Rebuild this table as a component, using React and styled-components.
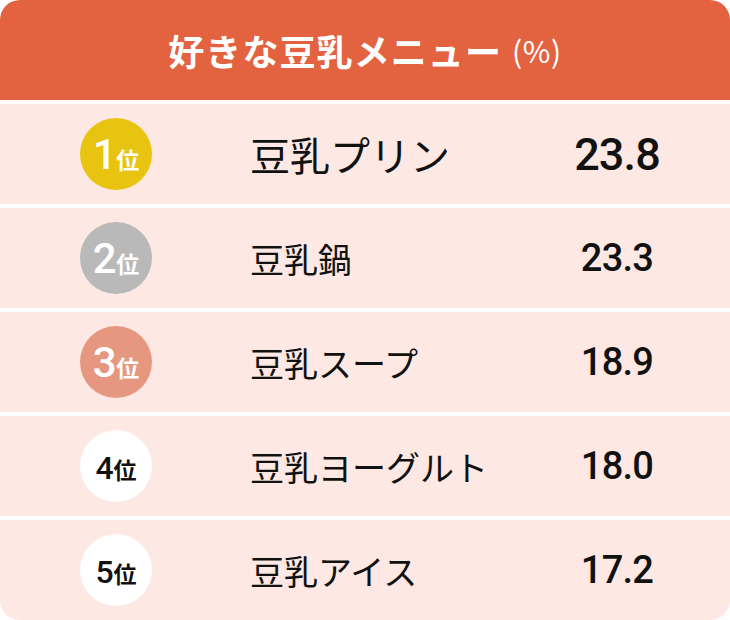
import React from 'react';
import styled, { createGlobalStyle } from 'styled-components';

const GlobalStyle = createGlobalStyle`
  html, body {
    margin: 0;
    padding: 0;
    background: #ffffff;
  }
  body {
    font-family: 'Noto Sans CJK JP', 'Noto Sans', sans-serif;
  }
`;

const Card = styled.div`
  width: 730px;
  height: 620px;
  border-radius: 20px;
  overflow: hidden;
  display: flex;
  flex-direction: column;
  gap: 4px;
  background: #ffffff;
`;

const Header = styled.div`
  height: 100px;
  flex-shrink: 0;
  background: #e3623f;
  color: #ffffff;
  display: flex;
  align-items: center;
  justify-content: center;
  font-size: 36px;
  font-weight: 700;
  letter-spacing: 0.03em;
`;

const Unit = styled.span`
  font-size: 30px;
  font-weight: 400;
  margin-left: 10px;
  letter-spacing: 0.02em;
`;

const Row = styled.div`
  height: 100px;
  flex-shrink: 0;
  background: #fde8e3;
  display: grid;
  grid-template-columns: 72px 1fr 140px;
  align-items: center;
  padding: 0 43px 0 80px;
`;

const Badge = styled.div`
  width: 72px;
  height: 72px;
  border-radius: 50%;
  background: ${p => p.$bg};
  color: ${p => p.$fg};
  display: flex;
  align-items: baseline;
  justify-content: center;
  padding-top: ${p => (p.$big ? '16px' : '22px')};
  box-sizing: border-box;
  font-weight: 700;
`;

const RankNum = styled.span`
  font-family: Roboto, 'Liberation Sans', sans-serif;
  font-size: ${p => (p.$big ? '42px' : '32px')};
  font-weight: 500;
  line-height: 1;
  letter-spacing: -0.03em;
`;

const RankSuffix = styled.span`
  font-size: 23px;
  line-height: 1;
  margin-left: 1px;
`;

const Name = styled.div`
  margin-left: 98px;
  color: #111111;
  font-size: ${p => (p.$big ? '40px' : '34px')};
  white-space: nowrap;
`;

const Value = styled.div`
  text-align: center;
  color: #111111;
  font-family: Roboto, 'Liberation Sans', sans-serif;
  font-size: ${p => (p.$big ? '45px' : '38px')};
  font-weight: 500;
  letter-spacing: -0.02em;
`;

const items = [
  { rank: 1, name: '豆乳プリン', value: '23.8', bg: '#e8c30f', fg: '#ffffff' },
  { rank: 2, name: '豆乳鍋', value: '23.3', bg: '#b9b9b9', fg: '#ffffff' },
  { rank: 3, name: '豆乳スープ', value: '18.9', bg: '#e5977f', fg: '#ffffff' },
  { rank: 4, name: '豆乳ヨーグルト', value: '18.0', bg: '#ffffff', fg: '#111111' },
  { rank: 5, name: '豆乳アイス', value: '17.2', bg: '#ffffff', fg: '#111111' },
];

const App = () => {
  return (
    <>
      <GlobalStyle />
      <Card>
        <Header>
          好きな豆乳メニュー<Unit>(%)</Unit>
        </Header>
        {items.map(item => {
          const big = item.rank <= 3;
          const top = item.rank === 1;
          return (
            <Row key={item.rank}>
              <Badge $bg={item.bg} $fg={item.fg} $big={big}>
                <RankNum $big={big}>{item.rank}</RankNum>
                <RankSuffix>位</RankSuffix>
              </Badge>
              <Name $big={top}>{item.name}</Name>
              <Value $big={top}>{item.value}</Value>
            </Row>
          );
        })}
      </Card>
    </>
  );
};

export default App;
